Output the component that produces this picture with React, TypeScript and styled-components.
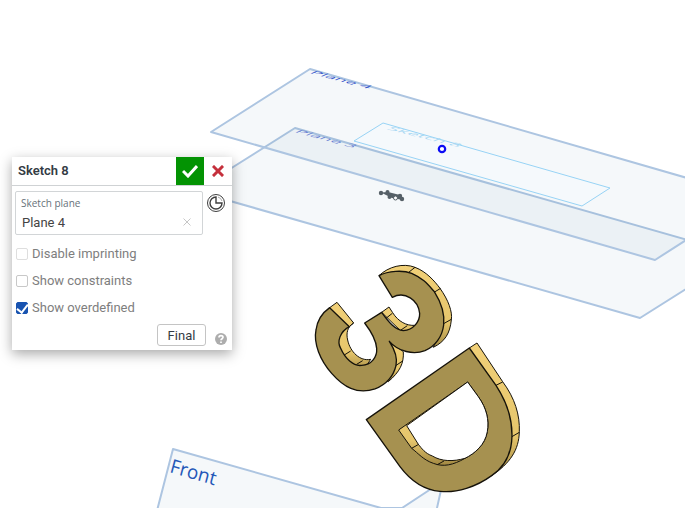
import React from 'react';
import styled, { createGlobalStyle } from 'styled-components';

const GlobalStyle = createGlobalStyle`
  * { box-sizing: border-box; }
  body { margin: 0; background: #fff; font-family: Roboto, "Liberation Sans", sans-serif; }
`;

const Workspace = styled.main`
  position: relative;
  min-height: 100vh;
  overflow: hidden;
`;

const Viewport = styled.svg`
  display: block;
  width: 100%;
  height: 100vh;
`;

const PlaneShape = styled.polygon`
  fill: rgba(70, 125, 165, 0.055);
  stroke: #adc5e1;
  stroke-width: 2;
  stroke-linejoin: round;
`;

const PlaneLabel = styled.text<{ $size: number; $color: string }>`
  font-family: "Open Sans", sans-serif;
  font-size: ${(p) => p.$size}px;
  font-weight: 500;
  fill: ${(p) => p.$color};
`;

const Wall = styled.path`
  fill: url(#wall);
  stroke: #15120a;
  stroke-width: 3;
  stroke-linejoin: round;
`;

const Face = styled.path`
  fill: #a69150;
  stroke: #15120a;
  stroke-width: 4;
  stroke-linejoin: round;
`;

const Hollow = styled.path`
  fill: #fff;
  stroke: #15120a;
  stroke-width: 3;
  stroke-linejoin: round;
`;

const Seam = styled.path`
  fill: none;
  stroke: #15120a;
  stroke-width: 3;
`;

const Panel = styled.form`
  position: absolute;
  top: 157px;
  left: 12px;
  width: 220px;
  background: #fff;
  box-shadow: 0 4px 12px rgba(0, 0, 0, 0.34);
`;

const PanelHeader = styled.header`
  display: flex;
  height: 29px;
  border-bottom: 1px solid #cfd2d4;
`;

const Title = styled.h1`
  flex: 1;
  margin: 0;
  padding-left: 6px;
  font-size: 13px;
  line-height: 28px;
  font-weight: 600;
  color: #333b44;
`;

const HeaderButton = styled.button<{ $accept?: boolean }>`
  display: grid;
  place-items: center;
  width: 28px;
  height: 28px;
  padding: 0;
  border: 0;
  background: ${(p) => (p.$accept ? '#039303' : '#fff')};
`;

const FieldRow = styled.div`
  display: flex;
  align-items: flex-start;
  gap: 3px;
  padding: 5px 6px 0 3px;
`;

const PlaneField = styled.div`
  display: grid;
  grid-template-columns: 1fr 20px;
  flex: 1;
  height: 44px;
  padding: 4px 5px 0 5px;
  border: 1px solid #d2d5d7;
  border-radius: 2px;
`;

const FieldLabel = styled.label`
  grid-column: 1 / -1;
  font-family: "Open Sans", sans-serif;
  font-size: 10px;
  line-height: 14px;
  color: #67717a;
`;

const FieldInput = styled.input`
  min-width: 0;
  width: 100%;
  height: 24px;
  padding: 0 1px;
  border: 0;
  outline: 0;
  background: transparent;
  font: 13px Roboto, sans-serif;
  color: #444;
`;

const IconButton = styled.button`
  display: grid;
  place-items: center;
  padding: 0;
  border: 0;
  background: transparent;
`;

const Options = styled.div`
  display: grid;
  gap: 7px;
  padding: 9px 4px 0;
`;

const Option = styled.label`
  display: flex;
  align-items: center;
  gap: 4px;
  font-size: 13px;
  line-height: 20px;
  color: #7e7e7e;
`;

const Tick = styled.input`
  display: grid;
  place-items: center;
  appearance: none;
  width: 12px;
  height: 12px;
  margin: 0;
  border: 1px solid #c8c8c8;
  border-radius: 2px;
  &:disabled { border-color: #dedede; }
  &:checked {
    border-color: #1853b0;
    background: #1853b0;
  }
  &:checked::after {
    content: "";
    width: 5px;
    height: 9px;
    margin-top: -2px;
    border: solid #fff;
    border-width: 0 2px 2px 0;
    transform: rotate(38deg);
  }
`;

const Footer = styled.footer`
  display: flex;
  justify-content: flex-end;
  align-items: flex-end;
  gap: 9px;
  padding: 6px 5px 4px 0;
`;

const FinalButton = styled.button`
  width: 49px;
  height: 22px;
  padding: 0;
  border: 1px solid #c4c4c4;
  border-radius: 3px;
  background: #fff;
  font: 13px Roboto, sans-serif;
  color: #333b44;
`;

const Scene = () => (
  <Viewport viewBox="0 0 685 508" preserveAspectRatio="xMinYMin slice" role="img" aria-label="Model view">
    <defs>
      <linearGradient id="wall" x1="0" y1="0" x2="0" y2="1">
        <stop offset="0" stopColor="#f1d078" />
        <stop offset="0.7" stopColor="#e6c66c" />
        <stop offset="1" stopColor="#a18842" />
      </linearGradient>
    </defs>
    <PlaneShape points="295,128 740,255 640,318 195,191" />
    <PlaneShape points="310,69 753,197 655,260 211,132" />
    <polygon points="383,123 610,188 582,206 354,141" fill="#f5f9fc" stroke="#97d3f5" />
    <PlaneLabel $size={16} $color="#3a59cc" transform="matrix(1.08 .29 -.5 .22 309 73)">Plane 4</PlaneLabel>
    <PlaneLabel $size={16} $color="#6c84d4" transform="matrix(1.08 .29 -.5 .22 294 132)">Plane 3</PlaneLabel>
    <PlaneLabel $size={16} $color="#a9d8f3" transform="matrix(1.15 .29 -.5 .22 386 129)">Sketch 8</PlaneLabel>
    <circle cx="442" cy="149" r="3.2" fill="#fff" stroke="#0b0bf5" strokeWidth="2.2" />
    <g fill="#566067">
      <path d="M381 192.500L388 192L400 195L403 200L392 198Z" />
      <circle cx="381" cy="193" r="2.200" />
      <circle cx="387.500" cy="192" r="2" />
      <circle cx="389.500" cy="197" r="2" />
      <circle cx="400" cy="196" r="2.200" />
      <circle cx="402" cy="199" r="2.200" />
      <circle cx="395.500" cy="198" r="2" fill="#fff" stroke="#566067" />
    </g>
    <PlaneShape points="173,449 381,508 402,508 443,481 437,508 437,530 152,530" />
    <PlaneLabel $size={19} $color="#2457b8" transform="matrix(.96 .28 -.26 .97 169 472)">Front</PlaneLabel>
    <g transform="translate(300 250) scale(.3333)">
      <Wall d="M237 77C265 50 310 38 345 52C380 65 405 95 420 115C445 150 458 185 454 210C450 250 435 275 400 292L418 250L415 190L380 115L300 85Z" />
      <Wall d="M268 274L310 305C312 340 300 365 265 395L240 380L265 330Z" />
      <Wall d="M89 173L111 157L161 219C142 230 138 250 143 270C150 305 180 335 212 328L185 370L100 320Z" />
      <Wall d="M245 187L267 171L278 188C295 215 320 228 345 226L320 260Z" />
      <Face d="M237 77C265 62 310 60 335 70C370 85 385 105 403 125C425 160 435 190 431 225C427 260 405 290 375 302C340 315 295 305 268 274C285 300 293 325 288 347C280 380 255 405 225 417C170 435 130 410 95 370C60 330 40 280 48 240C52 210 65 190 89 173L148 230C120 245 110 275 122 295C135 325 160 350 185 346C215 345 232 320 230 295C228 265 210 240 194 219L245 187C265 215 285 240 310 242C340 240 360 215 359 190C355 150 315 122 277 142Z" />
      <Seam d="M345 52L326 67M422 115L402 127M454 208L431 221M308 333L287 347M161 219L148 230M152 303L133 315M188 332L170 343M277 190L258 205M322 227L303 240" />
    </g>
    <g transform="translate(350 330) scale(.3333)">
      <Wall d="M358 54L381 39L458 155C495 205 510 255 508 305C507 360 480 400 425 437L350 300Z" />
      <Face d="M49 269L358 54L438 166C470 215 487 260 486 318C485 370 465 410 425 437C380 470 320 490 270 484C220 480 180 450 150 410Z" />
      <Wall d="M146 300L353 156L385 200C410 235 418 270 412 305C405 345 375 370 345 385C310 405 280 412 250 400C220 390 205 370 185 355Z" />
      <Hollow d="M170 287L353 156L385 200C410 235 418 270 412 305C405 345 375 370 345 385C310 395 275 395 247 378C225 370 215 355 205 343Z" />
      <Seam d="M458 156L438 166M508 307L486 320M206 343L185 355M282 393L262 404" />
    </g>
  </Viewport>
);

export default function App() {
  return (
    <>
      <GlobalStyle />
      <Workspace>
        <Scene />
        <Panel onSubmit={(e) => e.preventDefault()}>
          <PanelHeader>
            <Title>Sketch 8</Title>
            <HeaderButton $accept aria-label="Accept">
              <svg width="16" height="14" viewBox="0 0 16 14"><path d="M1 7L6 12L15 2" fill="none" stroke="#fff" strokeWidth="3" /></svg>
            </HeaderButton>
            <HeaderButton type="button" aria-label="Cancel">
              <svg width="12" height="12" viewBox="0 0 12 12"><path d="M2 2L10 10M10 2L2 10" stroke="#c5303c" strokeWidth="3" strokeLinecap="square" /></svg>
            </HeaderButton>
          </PanelHeader>
          <FieldRow>
            <PlaneField>
              <FieldLabel htmlFor="sketch-plane">Sketch plane</FieldLabel>
              <FieldInput id="sketch-plane" defaultValue="Plane 4" />
              <IconButton type="button" aria-label="Clear plane">
                <svg width="8" height="8" viewBox="0 0 8 8"><path d="M0.5 0.5L7.5 7.5M7.5 0.5L0.5 7.5" stroke="#c6c6c6" /></svg>
              </IconButton>
            </PlaneField>
            <IconButton type="button" aria-label="History">
              <svg width="20" height="24" viewBox="0 0 20 24" fill="none" stroke="#3f3f3f">
                <circle cx="10" cy="12" r="8.5" />
                <path d="M10 6A6 6 0 1 0 16 12H10Z" strokeWidth="1.4" />
                <path d="M12 6A6 6 0 0 1 16 10" stroke="#aaa" />
              </svg>
            </IconButton>
          </FieldRow>
          <Options>
            <Option><Tick type="checkbox" disabled />Disable imprinting</Option>
            <Option><Tick type="checkbox" />Show constraints</Option>
            <Option><Tick type="checkbox" defaultChecked />Show overdefined</Option>
          </Options>
          <Footer>
            <FinalButton type="button">Final</FinalButton>
            <IconButton type="button" aria-label="Help">
              <svg width="12" height="14" viewBox="0 0 12 14">
                <circle cx="6" cy="7" r="6" fill="#adadad" />
                <path d="M4 5.5C4 3 8 3 8 5.3C8 6.8 6 6.6 6 8.3M6 9.4V11" fill="none" stroke="#fff" strokeWidth="1.7" />
              </svg>
            </IconButton>
          </Footer>
        </Panel>
      </Workspace>
    </>
  );
}
